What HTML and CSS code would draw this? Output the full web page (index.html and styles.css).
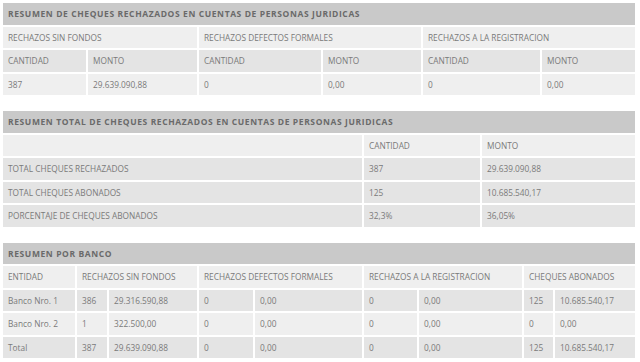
FILE: index.html
```html
<!DOCTYPE html>
<html lang="es">
<head>
    <meta charset="UTF-8">
    <title>Resumen de cheques rechazados</title>
    <link rel="stylesheet" href="styles.css">
</head>
<body>
    <!-- Resumen por tipo de rechazo -->
    <table class="summary">
        <colgroup>
            <col style="width: 83px"><col style="width: 109px">
            <col style="width: 122px"><col style="width: 98px">
            <col style="width: 117px"><col style="width: 93px">
        </colgroup>
        <tr class="title"><td colspan="6">RESUMEN DE CHEQUES RECHAZADOS EN CUENTAS DE PERSONAS JURIDICAS</td></tr>
        <tr class="light">
            <td colspan="2">RECHAZOS SIN FONDOS</td>
            <td colspan="2">RECHAZOS DEFECTOS FORMALES</td>
            <td colspan="2">RECHAZOS A LA REGISTRACION</td>
        </tr>
        <tr class="dark">
            <td>CANTIDAD</td><td>MONTO</td>
            <td>CANTIDAD</td><td>MONTO</td>
            <td>CANTIDAD</td><td>MONTO</td>
        </tr>
        <tr class="light">
            <td>387</td><td>29.639.090,88</td>
            <td>0</td><td>0,00</td>
            <td>0</td><td>0,00</td>
        </tr>
    </table>

    <!-- Resumen total -->
    <table class="summary">
        <colgroup>
            <col style="width: 359px"><col style="width: 116px"><col style="width: 153px">
        </colgroup>
        <tr class="title"><td colspan="3">RESUMEN TOTAL DE CHEQUES RECHAZADOS EN CUENTAS DE PERSONAS JURIDICAS</td></tr>
        <tr class="light"><td></td><td>CANTIDAD</td><td>MONTO</td></tr>
        <tr class="dark"><td>TOTAL CHEQUES RECHAZADOS</td><td>387</td><td>29.639.090,88</td></tr>
        <tr class="dark"><td>TOTAL CHEQUES ABONADOS</td><td>125</td><td>10.685.540,17</td></tr>
        <tr class="dark"><td>PORCENTAJE DE CHEQUES ABONADOS</td><td>32,3%</td><td>36,05%</td></tr>
    </table>

    <!-- Resumen por banco -->
    <table class="summary">
        <colgroup>
            <col style="width: 72px">
            <col style="width: 30px"><col style="width: 88px">
            <col style="width: 54px"><col style="width: 107px">
            <col style="width: 53px"><col style="width: 103px">
            <col style="width: 29px"><col style="width: 80px">
        </colgroup>
        <tr class="title"><td colspan="9">RESUMEN POR BANCO</td></tr>
        <tr class="light">
            <td>ENTIDAD</td>
            <td colspan="2">RECHAZOS SIN FONDOS</td>
            <td colspan="2">RECHAZOS DEFECTOS FORMALES</td>
            <td colspan="2">RECHAZOS A LA REGISTRACION</td>
            <td colspan="2">CHEQUES ABONADOS</td>
        </tr>
        <tr class="dark">
            <td>Banco Nro. 1</td>
            <td>386</td><td>29.316.590,88</td>
            <td>0</td><td>0,00</td>
            <td>0</td><td>0,00</td>
            <td>125</td><td>10.685.540,17</td>
        </tr>
        <tr class="light">
            <td>Banco Nro. 2</td>
            <td>1</td><td>322.500,00</td>
            <td>0</td><td>0,00</td>
            <td>0</td><td>0,00</td>
            <td>0</td><td>0,00</td>
        </tr>
        <tr class="dark">
            <td>Total</td>
            <td>387</td><td>29.639.090,88</td>
            <td>0</td><td>0,00</td>
            <td>0</td><td>0,00</td>
            <td>125</td><td>10.685.540,17</td>
        </tr>
    </table>
</body>
</html>
```

FILE: styles.css
```css
:root {
    --title-bg: #c9c9c9;
    --light-row: #efefef;
    --dark-row: #e4e4e4;
    --text: #7a7a7a;
    --title-text: #6a6a6a;
}

* {
    margin: 0;
    padding: 0;
    box-sizing: border-box;
}

body {
    background-color: #ffffff;
    padding: 1px 0 0 1px;
    font-family: 'Open Sans', 'DejaVu Sans', sans-serif;
    font-size: 8.3px;
    color: var(--text);
}

.summary {
    width: 636px;
    table-layout: fixed;
    border-collapse: separate;
    border-spacing: 2px;
    margin-bottom: 12px;
}

.summary td {
    height: 21.5px;
    padding: 0 5px;
    vertical-align: middle;
    white-space: nowrap;
    overflow: hidden;
}

.title td {
    background-color: var(--title-bg);
    color: var(--title-text);
    font-weight: bold;
    font-size: 8.5px;
    letter-spacing: 0.6px;
}

.light td {
    background-color: var(--light-row);
}

.dark td {
    background-color: var(--dark-row);
}
```
